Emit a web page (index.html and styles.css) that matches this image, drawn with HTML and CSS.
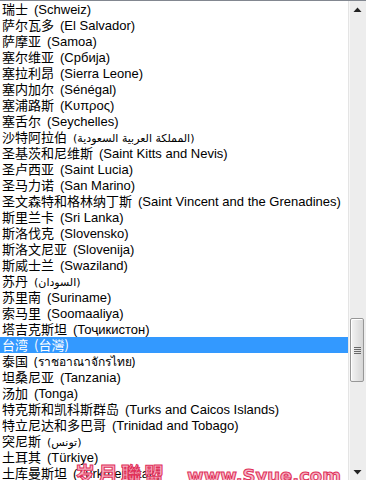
FILE: index.html
```html
<!DOCTYPE html>
<html lang="zh-CN">
<head>
    <meta charset="UTF-8">
    <title>国家列表</title>
    <link rel="stylesheet" href="styles.css">
</head>
<body>

    <!-- Country list box -->
    <div class="listbox">
        <ul class="items">
            <li><span class="zh">瑞士</span>(Schweiz)</li>
            <li><span class="zh">萨尔瓦多</span>(El Salvador)</li>
            <li><span class="zh">萨摩亚</span>(Samoa)</li>
            <li><span class="zh">塞尔维亚</span>(Србија)</li>
            <li><span class="zh">塞拉利昂</span>(Sierra Leone)</li>
            <li><span class="zh">塞内加尔</span>(Sénégal)</li>
            <li><span class="zh">塞浦路斯</span>(Κυπρος)</li>
            <li><span class="zh">塞舌尔</span>(Seychelles)</li>
            <li><span class="zh">沙特阿拉伯</span><span class="ar">(المملكة العربية السعودية)</span></li>
            <li><span class="zh">圣基茨和尼维斯</span>(Saint Kitts and Nevis)</li>
            <li><span class="zh">圣卢西亚</span>(Saint Lucia)</li>
            <li><span class="zh">圣马力诺</span>(San Marino)</li>
            <li><span class="zh">圣文森特和格林纳丁斯</span>(Saint Vincent and the Grenadines)</li>
            <li><span class="zh">斯里兰卡</span>(Sri Lanka)</li>
            <li><span class="zh">斯洛伐克</span>(Slovensko)</li>
            <li><span class="zh">斯洛文尼亚</span>(Slovenija)</li>
            <li><span class="zh">斯威士兰</span>(Swaziland)</li>
            <li><span class="zh">苏丹</span><span class="ar">(السودان)</span></li>
            <li><span class="zh">苏里南</span>(Suriname)</li>
            <li><span class="zh">索马里</span>(Soomaaliya)</li>
            <li><span class="zh">塔吉克斯坦</span>(Тоҷикистон)</li>
            <li class="selected"><span class="zh">台湾</span><span class="zh-native">(台灣)</span></li>
            <li><span class="zh">泰国</span><span class="th">(ราชอาณาจักรไทย)</span></li>
            <li><span class="zh">坦桑尼亚</span>(Tanzania)</li>
            <li><span class="zh">汤加</span>(Tonga)</li>
            <li><span class="zh">特克斯和凯科斯群岛</span>(Turks and Caicos Islands)</li>
            <li><span class="zh">特立尼达和多巴哥</span>(Trinidad and Tobago)</li>
            <li><span class="zh">突尼斯</span><span class="ar">(تونس)</span></li>
            <li><span class="zh">土耳其</span>(Türkiye)</li>
            <li><span class="zh">土库曼斯坦</span>(Türkmenistan)</li>
        </ul>

        <!-- Vertical scrollbar -->
        <div class="scrollbar">
            <div class="arrow">
                <svg width="9" height="6" viewBox="0 0 9 6"><path d="M4.5 0.5 L8.5 5 L0.5 5 Z" fill="#222"/></svg>
            </div>
            <div class="track">
                <div class="thumb"><span class="grip"></span></div>
            </div>
            <div class="arrow">
                <svg width="9" height="6" viewBox="0 0 9 6"><path d="M0.5 1 L8.5 1 L4.5 5.5 Z" fill="#222"/></svg>
            </div>
        </div>

        <!-- Site watermark stamped over the picture -->
        <div class="watermark">
            <span class="wm-cn">岁月聯盟</span>
            <span class="wm-url">www.Syue.com</span>
        </div>
    </div>

</body>
</html>
```

FILE: styles.css
```css
/* Reset */
* {
    box-sizing: border-box;
}

body {
    margin: 0;
    background: #fff;
    font-family: "Liberation Sans", Arial, "Noto Sans CJK SC", sans-serif;
    font-size: 13px;
    color: #000;
}

/* List box */
.listbox {
    position: relative;
    display: flex;
    height: 480px;
    border-top: 1px solid #828790;
    overflow: hidden;
}

.items {
    flex: 1;
    list-style: none;
    margin: 0;
    padding: 0;
    overflow: hidden;
}

.items li {
    height: 16px;
    line-height: 16px;
    padding-left: 2px;
    white-space: nowrap;
}

.items li.selected {
    background: #3399ff;
    color: #fff;
}

.zh,
.zh-native {
    font-family: "Noto Sans CJK SC", sans-serif;
}

.zh {
    margin-right: 6px;
}

.ar {
    font-family: "DejaVu Sans", sans-serif;
    font-size: 11px;
}

.th {
    font-family: "Noto Sans", "DejaVu Sans", sans-serif;
    font-size: 12px;
}

/* Scrollbar */
.scrollbar {
    width: 18px;
    display: flex;
    flex-direction: column;
    background: #ededed;
    border-left: 1px solid #e4e4e4;
    box-shadow: inset 1px 0 0 #f7f7f7;
}

.arrow {
    height: 17px;
    display: flex;
    align-items: center;
    justify-content: center;
}

.track {
    flex: 1;
}

.thumb {
    margin: 300px 2px 0 1px;
    height: 64px;
    border: 1px solid #979797;
    border-radius: 2px;
    background: linear-gradient(to right, #f4f4f4, #e2e2e2 60%, #d6d6d6);
    box-shadow: inset 1px 1px 0 #fff;
    display: flex;
    align-items: center;
    justify-content: center;
}

.grip {
    width: 7px;
    height: 7px;
    background: repeating-linear-gradient(to bottom, #4a4a4a 0 1px, transparent 1px 2px);
    opacity: 0.8;
}

/* Watermark */
.watermark {
    position: absolute;
    left: 75px;
    top: 458px;
    display: flex;
    align-items: baseline;
    gap: 20px;
    font-weight: bold;
    color: #f7b3c4;
    -webkit-text-stroke: 1px #e0305a;
    pointer-events: none;
}

.wm-cn {
    font-family: "Noto Sans CJK SC", sans-serif;
    font-size: 20px;
    letter-spacing: 3px;
}

.wm-url {
    font-family: "DejaVu Sans", sans-serif;
    font-size: 18px;
}
```
